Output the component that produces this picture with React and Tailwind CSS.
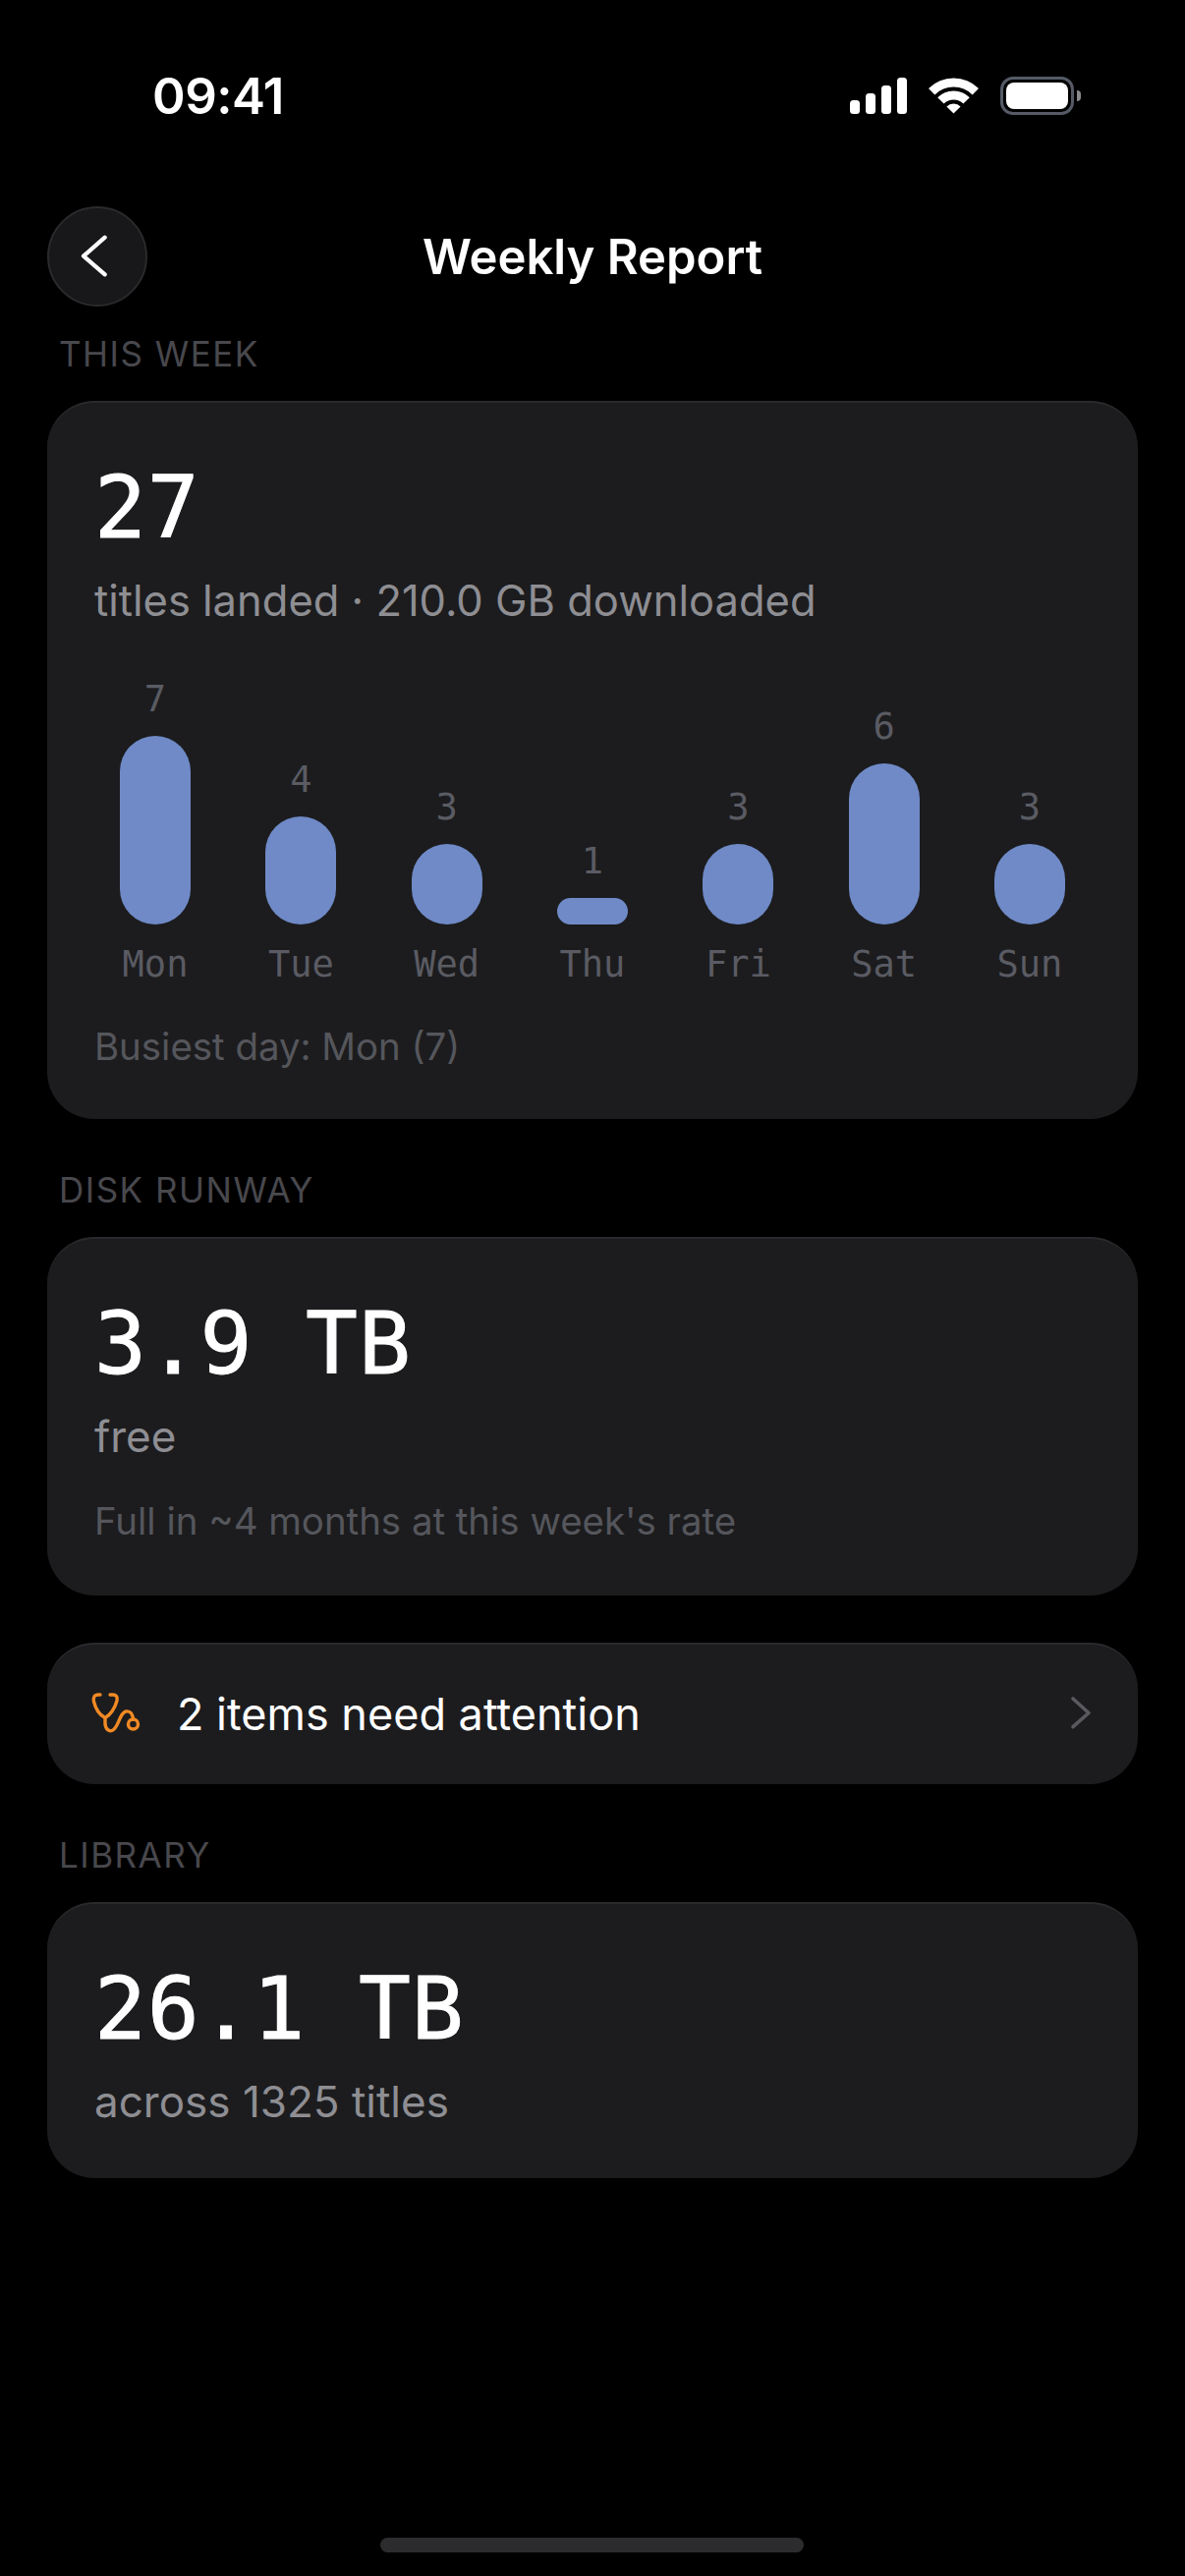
const DAYS = [
  { day: "Mon", count: 7 },
  { day: "Tue", count: 4 },
  { day: "Wed", count: 3 },
  { day: "Thu", count: 1 },
  { day: "Fri", count: 3 },
  { day: "Sat", count: 6 },
  { day: "Sun", count: 3 },
];

const MONO = "font-['DejaVu_Sans_Mono',monospace]";
const BIG = `${MONO} text-[88px] leading-[102px] tracking-[0.8px] text-white [-webkit-text-stroke:1px_white]`;

function StatusBar() {
  return (
    <div className="flex h-[210px] items-start justify-between pl-[155px] pr-[106px] pt-[67px]">
      <span className="text-[51px] font-semibold leading-[62px] tracking-[-0.5px] text-white">09:41</span>
      <div className="mt-[11px] flex items-center gap-[22px]">
        <svg width="58" height="37" viewBox="0 0 58 37" fill="white">
          <rect x="0" y="23" width="10" height="14" rx="3.5" />
          <rect x="16" y="16" width="10" height="21" rx="3.5" />
          <rect x="32" y="8" width="10" height="29" rx="3.5" />
          <rect x="48" y="0" width="10" height="37" rx="3.5" />
        </svg>
        <svg width="51" height="37" viewBox="0 0 51 37" fill="none" stroke="white" strokeWidth="9">
          <path d="M3.2 14.2 A31.5 31.5 0 0 1 47.8 14.2" />
          <path d="M12.4 23.4 A18.5 18.5 0 0 1 38.6 23.4" />
          <path d="M25.5 36.5 L18.4 29.4 A10 10 0 0 1 32.6 29.4 Z" fill="white" stroke="none" />
        </svg>
        <div className="flex items-center">
          <div className="flex h-[39px] w-[75px] items-center justify-center rounded-[13px] border-[3px] border-[#555a66] p-[3px]">
            <div className="h-full w-full rounded-[8px] bg-white" />
          </div>
          <div className="ml-[3px] h-[11px] w-[4px] rounded-r-full bg-[#8b8b8f]" />
        </div>
      </div>
    </div>
  );
}

function SectionLabel({ children }) {
  return (
    <div className="mb-[27px] pl-[12px] pt-[1px] text-[35px] leading-[41px] tracking-[1.5px] text-[#48484d]">{children}</div>
  );
}

function Card({ className, children }) {
  return (
    <div className={`rounded-[48px] border-t-2 border-[#2a2a2d] bg-[#1c1c1e] ${className}`}>{children}</div>
  );
}

function Bar({ day, count }) {
  return (
    <div className="flex w-[72px] flex-col items-center">
      <span className={`${MONO} mb-[15px] text-[37px] leading-[44px] text-[#5a5b63]`}>{count}</span>
      <div className="w-[72px] rounded-[36px] bg-[#6f8ac7]" style={{ height: count * 27.4 }} />
      <span className={`${MONO} mt-[19px] text-[37px] leading-[44px] whitespace-nowrap text-[#5a5b63]`}>{day}</span>
    </div>
  );
}

function StethoscopeIcon() {
  return (
    <svg width="70" height="70" viewBox="0 0 70 70" fill="none" stroke="#f08a24" strokeWidth="3.4" strokeLinecap="round" strokeLinejoin="round">
      <path d="M18 15 H16 C12 15 10.5 18 11.5 22 C13.5 30 18 36 23 38.5 C28 36 33 29 35 21 C36 17 34 15 31 15 H28" />
      <path d="M23 38.5 V44 C23 50 27 52.5 30 51.5 C37 49 37 34 44 32 C49 31 51 35 51.5 40" />
      <circle cx="51.5" cy="45" r="5" />
    </svg>
  );
}

export default function App() {
  return (
    <div className="relative h-[2622px] w-[1206px] bg-black font-['Inter',sans-serif]">
      <StatusBar />

      <div className="relative flex h-[102px] items-center justify-center px-[48px]">
        <button className="absolute left-[48px] top-0 h-[102px] w-[102px] rounded-full border-2 border-[#2a2a2c] bg-[#18181a]">
          <svg width="98" height="98" viewBox="2 2 98 98" fill="none" stroke="white" strokeWidth="4.2" strokeLinecap="round" strokeLinejoin="round">
            <path d="M58.7 31.7 L37 50.7 L58.7 69.3" />
          </svg>
        </button>
        <h1 className="pt-[2px] text-[49px] font-semibold leading-[62px] text-white">Weekly Report</h1>
      </div>

      <div className="flex flex-col px-[48px] pt-[27px]">
        <SectionLabel>THIS WEEK</SectionLabel>
        <Card className="mb-[51px] h-[731px] px-[48px] pt-[56px]">
          <div className={BIG}>27</div>
          <div className="mt-[17px] text-[43.5px] leading-[52px] text-[#8e8e93]">titles landed · 210.0 GB downloaded</div>
          <div className="mt-[30px] flex h-[337px] items-end justify-between px-[26px]">
            {DAYS.map((d) => (
              <Bar key={d.day} day={d.day} count={d.count} />
            ))}
          </div>
          <div className="mt-[39px] text-[38.4px] leading-[44px] text-[#55565c]">Busiest day: Mon (7)</div>
        </Card>

        <SectionLabel>DISK RUNWAY</SectionLabel>
        <Card className="mb-[48px] h-[365px] px-[48px] pt-[56px]">
          <div className={BIG}>3.9 TB</div>
          <div className="mt-[17px] text-[44px] leading-[52px] text-[#8e8e93]">free</div>
          <div className="mt-[38px] text-[38.4px] leading-[44px] text-[#55565c]">Full in ~4 months at this week's rate</div>
        </Card>

        <Card className="mb-[51px] flex h-[144px] items-center pl-[36px] pr-[28px]">
          <StethoscopeIcon />
          <span className="ml-[26px] flex-1 text-[45px] leading-[54px] text-white">2 items need attention</span>
          <svg width="70" height="70" viewBox="0 0 70 70" fill="none" stroke="#5a5a5e" strokeWidth="3.6" strokeLinecap="round" strokeLinejoin="round">
            <path d="M32 19 L48 33.5 L32 47.7" />
          </svg>
        </Card>

        <SectionLabel>LIBRARY</SectionLabel>
        <Card className="h-[281px] px-[48px] pt-[56px]">
          <div className={BIG}>26.1 TB</div>
          <div className="mt-[17px] text-[44px] leading-[52px] text-[#8e8e93]">across 1325 titles</div>
        </Card>
      </div>

      <div className="absolute bottom-[24px] left-[387px] h-[15px] w-[431px] rounded-full bg-[#2c2c2e]" />
    </div>
  );
}
